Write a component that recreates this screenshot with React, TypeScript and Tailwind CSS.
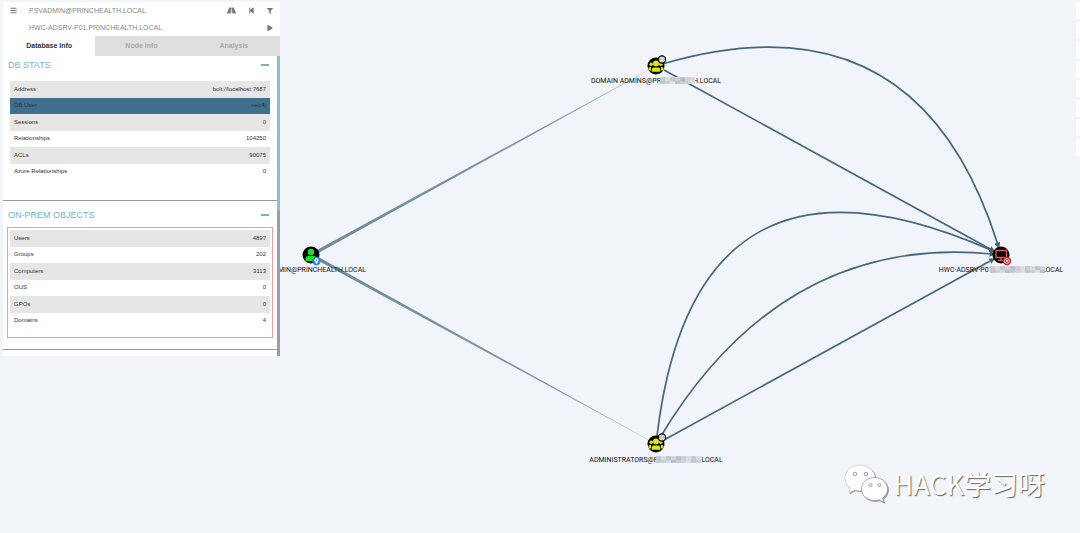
import { useState } from 'react';
import type { ReactNode } from 'react';
import { FaBars, FaRoad, FaStepBackward, FaFilter, FaPlay } from 'react-icons/fa';

type Stat = { label: string; value: string; active?: boolean };

const dbStats: Stat[] = [
    { label: 'Address', value: 'bolt://localhost:7687' },
    { label: 'DB User', value: 'neo4j', active: true },
    { label: 'Sessions', value: '0' },
    { label: 'Relationships', value: '104250' },
    { label: 'ACLs', value: '90075' },
    { label: 'Azure Relationships', value: '0' },
];

const onPremObjects: Stat[] = [
    { label: 'Users', value: '4897' },
    { label: 'Groups', value: '202' },
    { label: 'Computers', value: '3113' },
    { label: 'OUS', value: '0' },
    { label: 'GPOs', value: '0' },
    { label: 'Domains', value: '4' },
];

const tabs = ['Database Info', 'Node Info', 'Analysis'];

const canvasTools = ['Refresh', 'Export', 'Import', 'Upload', 'Activity', 'Layout', 'Settings', 'About'];

function StatTable({ rows }: { rows: Stat[] }) {
    return (
        <table className="h-[99px] w-full text-[6px] leading-[8px] text-[#333]">
            <tbody>
                {rows.map((row) => (
                    <tr key={row.label} className={row.active ? 'bg-[#406f8e] text-[#22384a]' : 'odd:bg-[#e6e6e6]'}>
                        <th scope="row" className="px-1 pb-px text-left font-normal">{row.label}</th>
                        <td className="px-1 pb-px text-right">{row.value}</td>
                    </tr>
                ))}
            </tbody>
        </table>
    );
}

function Section({ title, children }: { title: string; children: ReactNode }) {
    const [open, setOpen] = useState(true);

    return (
        <section className="border-b border-[#9a9a9a] not-first:pt-1.5">
            <h2>
                <button
                    type="button"
                    aria-expanded={open}
                    onClick={() => setOpen(!open)}
                    className="flex w-full items-center justify-between pr-2 pl-[5px] text-[9px] leading-4 text-[#78b0c8]"
                >
                    {title}
                    <span className="h-0.5 w-2 bg-[#78b0c8]" />
                </button>
            </h2>
            {open && children}
        </section>
    );
}

function SidePanel() {
    const [tab, setTab] = useState(tabs[0]);

    return (
        <aside className="relative z-10 mt-0.5 ml-[3px] w-[277px] shrink-0 self-start bg-white">
            <div className="flex h-[17px] items-center gap-3 px-[7px] text-[#777]">
                <button type="button" aria-label="Menu"><FaBars size={7} /></button>
                <input
                    aria-label="Start node"
                    defaultValue="PSVADMIN@PRINCHEALTH.LOCAL"
                    className="min-w-0 flex-1 text-[7px] leading-[10px] text-[#888] outline-none"
                />
                <button type="button" aria-label="Pathfinding"><FaRoad size={9} /></button>
                <button type="button" aria-label="Back"><FaStepBackward size={7} /></button>
                <button type="button" aria-label="Filter"><FaFilter size={6} /></button>
            </div>
            <div className="flex h-[17px] items-center pr-[7px] pl-[26px] text-[#777]">
                <input
                    aria-label="Target node"
                    defaultValue="HWC-ADSRV-P01.PRINCHEALTH.LOCAL"
                    className="min-w-0 flex-1 text-[7px] leading-[10px] text-[#888] outline-none"
                />
                <button type="button" aria-label="Play"><FaPlay size={6} /></button>
            </div>
            <div role="tablist" className="grid grid-cols-3">
                {tabs.map((name) => (
                    <button
                        key={name}
                        type="button"
                        role="tab"
                        aria-selected={tab === name}
                        onClick={() => setTab(name)}
                        className={`h-5 text-[7px] font-bold ${tab === name ? 'bg-white text-[#333]' : 'bg-[#dedede] text-[#aaa]'}`}
                    >
                        {name}
                    </button>
                ))}
            </div>
            <div className="flex">
                <div className="min-w-0 flex-1 pt-px pb-1.5">
                    <Section title="DB STATS">
                        <div className="px-[7px] pt-2 pb-5">
                            <StatTable rows={dbStats} />
                        </div>
                    </Section>
                    <Section title="ON-PREM OBJECTS">
                        <div className="mx-1 mt-1 mb-[11px] border border-[#f59a9a] px-0.5 pt-0.5 pb-2">
                            <StatTable rows={onPremObjects} />
                        </div>
                    </Section>
                </div>
                <div className="flex w-[3px] flex-col bg-[#9a9ea2]">
                    <div className="h-[155px] bg-[#8fc0c4]" />
                </div>
            </div>
        </aside>
    );
}

const edges = [
    'M664 63.5Q918 -10 998 245',
    'M664 70L992 250',
    'M657 436Q695 120 992 250.500',
    'M661 436Q783 234 992 254',
    'M664 440L992 260',
];

// Mosaic squares that hide the middle of a domain name
const mosaic = ['#c9cdd4', '#dcdfe4', '#c4c8cf', '#d3d6dc', '#bcc2cb', '#cdd0d6', '#dadde2'];

function Redaction({ x, y, cells }: { x: number; y: number; cells: number }) {
    return (
        <g opacity=".95">
            {Array.from({ length: cells }, (_, i) => (
                <g key={i}>
                    <rect x={x + i * 5} y={y} width="5" height="4" fill={mosaic[i % 7]} />
                    <rect x={x + i * 5} y={y + 4} width="5" height="3" fill={mosaic[(i * 3 + 2) % 7]} />
                </g>
            ))}
        </g>
    );
}

function GroupNode({ x, y }: { x: number; y: number }) {
    return (
        <g transform={`translate(${x} ${y})`}>
            <circle r="8.500" fill="#000" />
            <g fill="#dbe609">
                <circle cx="-4.800" cy="-1.800" r="1.800" />
                <circle cx="4.800" cy="-1.800" r="1.800" />
                <path d="M-7.500 4.500V2.500q0-1.500 1.500-1.500h1v3.500zM7.500 4.500V2.500q0-1.500-1.500-1.500h-1v3.500z" />
                <circle cy="-2.500" r="3" />
                <path d="M-4.500 6V3.500Q-4.500 1.200-2.200 1.200H2.200Q4.500 1.200 4.500 3.500V6z" stroke="#000" strokeWidth=".5" />
            </g>
            <circle cx="6" cy="-6.500" r="3.600" fill="#fff" stroke="#000" strokeWidth="1.200" />
            <path d="M4.500-8.200h3l1 1.500L6-4 3.500-6.700zM3.500-6.700h5" fill="none" stroke="#777" strokeWidth=".5" />
        </g>
    );
}

function Graph() {
    return (
        <svg className="absolute top-0 left-0 h-full w-full overflow-hidden" role="img" aria-label="Attack path graph">
            <defs>
                <marker id="arrow" viewBox="0 0 5 5" refX="2" refY="2.5" markerWidth="6" markerHeight="6" markerUnits="userSpaceOnUse" orient="auto">
                    <path d="M0 0L5 2.500L0 5z" fill="#3e6074" />
                </marker>
                <linearGradient id="fade" gradientUnits="userSpaceOnUse" x1="311" y1="0" x2="656" y2="0">
                    <stop offset="0" stopColor="#6f8998" />
                    <stop offset=".7" stopColor="#8299a5" />
                    <stop offset="1" stopColor="#c8d1d6" />
                </linearGradient>
            </defs>

            <path d="M310.500 253.500L656 65.700V66.300L312 256.500zM310.500 256.500L656 444.300V443.700L312 253.500z" fill="url(#fade)" />
            {edges.map((d) => (
                <path key={d} d={d} fill="none" stroke="#46677b" strokeWidth="1.700" markerEnd="url(#arrow)" />
            ))}

            <g>
                <circle cx="311" cy="255" r="8.500" fill="#000" />
                <circle cx="311" cy="252" r="3.200" fill="#17e625" />
                <path d="M305.500 261V259Q305.500 256 308.500 256H313.500Q316.500 256 316.500 259V261z" fill="#17e625" />
                <circle cx="316.500" cy="261" r="4.200" fill="#2f86e0" />
                <path d="M316.500 264q-2-2.500-2-3.800a2 2 0 0 1 4 0q0 1.300-2 3.800z" fill="#fff" />
                <circle cx="316.500" cy="260.200" r=".8" fill="#2f86e0" />
            </g>
            <GroupNode x={656} y={66} />
            <GroupNode x={656} y={444} />
            <g>
                <circle cx="1001" cy="255" r="8.500" fill="#000" />
                <path d="M996 250.500h10.500v7H996zM1001 257.500v2.500M998 260.500h5" fill="none" stroke="#e0605b" strokeWidth="1.300" />
                <circle cx="1007" cy="261" r="4.200" fill="#c81e28" />
                <circle cx="1007" cy="261" r="2.400" fill="none" stroke="#fff" strokeWidth=".8" />
                <path d="M1005.800 259.800l2.400 2.400M1008.200 259.800l-2.400 2.400" stroke="#fff" strokeWidth=".7" />
            </g>

            <g className="fill-[#111] font-['Roboto',sans-serif] text-[7px]" textAnchor="middle">
                <text x="366" y="272" textAnchor="end">MIN@PRINCHEALTH.LOCAL</text>
                <text x="656" y="83">DOMAIN ADMINS@PRINCHEALTH.LOCAL</text>
                <text x="656" y="462">ADMINISTRATORS@PRINCHEALTH.LOCAL</text>
                <text x="1001" y="272">HWC-ADSRV-P01.PRINCHEALTH.LOCAL</text>
            </g>
            <Redaction x={660} y={77} cells={7} />
            <Redaction x={656} y={456} cells={9} />
            <Redaction x={990} y={266} cells={11} />
        </svg>
    );
}

function Watermark() {
    return (
        <div className="absolute right-[35px] bottom-[29px] flex items-center gap-1.5">
            <svg width="44" height="40" viewBox="0 0 44 40" className="drop-shadow-[1px_1px_0px_#999]">
                <path d="M16 1C7.500 1 1 6.800 1 14c0 4 2 7.500 5.300 9.900L5 29l5.500-3c1.800.5 3.600.8 5.500.8 8.500 0 15-5.700 15-12.800S24.500 1 16 1z" fill="#fff" stroke="#bbb" strokeWidth=".6" />
                <path d="M30.500 13.500c-7.300 0-13 5-13 11.500s5.700 11.500 13 11.500c1.600 0 3.200-.2 4.600-.7l4.700 2.600-1.200-4.300C41.600 32 43.500 28.700 43.500 25c0-6.500-5.700-11.500-13-11.500z" fill="#fff" stroke="#999" strokeWidth=".8" />
                <g fill="#fff" stroke="#888" strokeWidth=".8">
                    <circle cx="11" cy="10" r="1.800" />
                    <circle cx="22" cy="10" r="1.800" />
                    <circle cx="26.500" cy="21" r="1.500" />
                    <circle cx="35.500" cy="21" r="1.500" />
                </g>
            </svg>
            <p className="font-['Noto_Sans_CJK_SC',sans-serif] text-[27px] leading-[34px] font-normal text-white [text-shadow:1px_1px_1px_#666]">
                HACK学习呀
            </p>
        </div>
    );
}

export default function App() {
    return (
        <main className="relative flex min-h-screen justify-between overflow-hidden bg-[#f1f5fa] font-['Liberation_Sans',Arial,sans-serif]">
            <Graph />
            <SidePanel />
            <nav aria-label="Canvas tools" className="relative mt-0.5 flex h-[154px] flex-col justify-between">
                {canvasTools.map((tool) => (
                    <button key={tool} type="button" aria-label={tool} className="h-[17px] w-1 rounded-l-xs bg-white" />
                ))}
            </nav>
            <Watermark />
        </main>
    );
}
